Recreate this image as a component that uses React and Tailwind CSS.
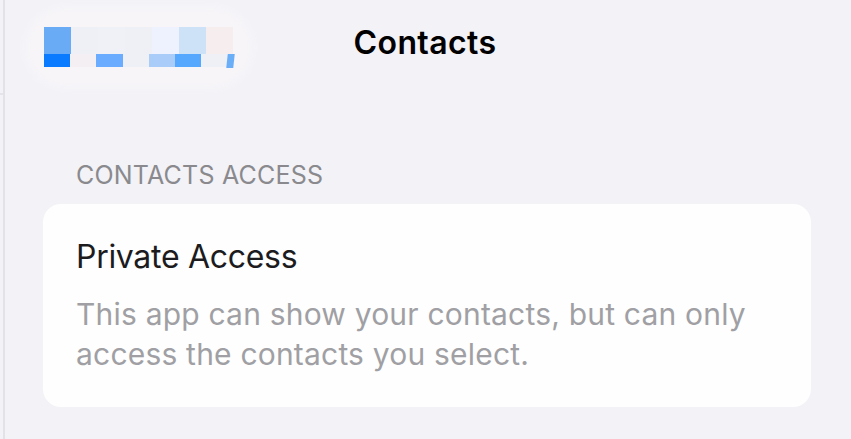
import React from "react";

// pixelated (blurred) back button in the top-left corner
const mosaicTop = ["#6aabf5", "#eef0f6", "#eff1f6", "#eef0f6", "#eef2fe", "#cde2f6", "#f6edef"];
const mosaicBottom = ["#0a7aff", "#f3eff3", "#6aacff", "#eef0f6", "#a9cdf8", "#56a8ff", "#eef0f6"];

function BlurredBack() {
  return (
    <div className="ml-[30px] rounded-[40px] bg-[#f7f5f8] px-[14px] py-[15px] w-[218px] shadow-[0_0_12px_6px_#f7f5f8]">
      <div className="flex">
        {mosaicTop.map((c, i) => (
          <div key={i} className="h-[27px] w-[27px]" style={{ backgroundColor: c }} />
        ))}
      </div>
      <div className="flex">
        {mosaicBottom.map((c, i) => (
          <div key={i} className="h-[13px] w-[27px]" style={{ backgroundColor: c }} />
        ))}
        <div className="h-[14px] w-[7px] bg-[#6aaef8] -skew-x-6" />
      </div>
    </div>
  );
}

export default function App() {
  return (
    <div className="w-[851px] h-[439px] bg-[#f2f2f7] flex font-['Inter',sans-serif] overflow-hidden">
      {/* sidebar edge */}
      <div className="w-[3px] flex flex-col">
        <div className="h-[93px]" />
        <div className="h-[2px] bg-[#e4e4ea]" />
      </div>
      <div className="w-[2px] bg-[#e2e2e8]" />

      <div className="flex-1 flex flex-col">
        {/* header */}
        <div className="h-[88px] grid grid-cols-[1fr_auto_1fr] items-center">
          <div className="-ml-[5px] mt-[7px]">
            <BlurredBack />
          </div>
          <h1 className="text-[32px] font-semibold text-black tracking-[0.4px] -mt-[2px] ml-[-6px]">Contacts</h1>
          <div />
        </div>

        {/* section */}
        <div className="pl-[38px] pr-[40px] pt-[72px]">
          <div className="pl-[33px] text-[25px] text-[#8a8a8e] tracking-[0.2px] leading-[30px]">CONTACTS ACCESS</div>
          <div className="mt-[14px] h-[203px] rounded-[18px] bg-[#fefefe] pl-[33px] pr-[40px] pt-[33px]">
            <div className="text-[32px] text-[#1c1c1e] leading-[40px] tracking-[-0.3px]">Private Access</div>
            <p className="mt-[17px] text-[30px] text-[#a0a0a4] leading-[40px] tracking-[0.2px]">
              This app can show your contacts, but can only access the contacts you select.
            </p>
          </div>
        </div>
      </div>
    </div>
  );
}
